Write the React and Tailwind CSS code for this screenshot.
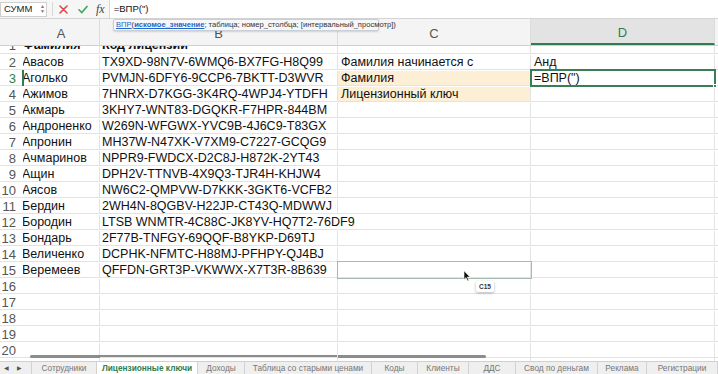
import React from "react";

const rows = [
  ["Авасов", "TX9XD-98N7V-6WMQ6-BX7FG-H8Q99", "Фамилия начинается с", "Анд"],
  ["Аголько", "PVMJN-6DFY6-9CCP6-7BKTT-D3WVR", "Фамилия", "=ВПР(\")"],
  ["Ажимов", "7HNRX-D7KGG-3K4RQ-4WPJ4-YTDFH", "Лицензионный ключ", ""],
  ["Акмарь", "3KHY7-WNT83-DGQKR-F7HPR-844BM", "", ""],
  ["Андроненко", "W269N-WFGWX-YVC9B-4J6C9-T83GX", "", ""],
  ["Апронин", "MH37W-N47XK-V7XM9-C7227-GCQG9", "", ""],
  ["Ачмаринов", "NPPR9-FWDCX-D2C8J-H872K-2YT43", "", ""],
  ["Ащин", "DPH2V-TTNVB-4X9Q3-TJR4H-KHJW4", "", ""],
  ["Аясов", "NW6C2-QMPVW-D7KKK-3GKT6-VCFB2", "", ""],
  ["Бердин", "2WH4N-8QGBV-H22JP-CT43Q-MDWWJ", "", ""],
  ["Бородин", "LTSB WNMTR-4C88C-JK8YV-HQ7T2-76DF9", "", ""],
  ["Бондарь", "2F77B-TNFGY-69QQF-B8YKP-D69TJ", "", ""],
  ["Величенко", "DCPHK-NFMTC-H88MJ-PFHPY-QJ4BJ", "", ""],
  ["Веремеев", "QFFDN-GRT3P-VKWWX-X7T3R-8B639", "", ""],
  ["", "", "", ""],
  ["", "", "", ""],
  ["", "", "", ""],
  ["", "", "", ""],
  ["", "", "", ""],
];

const tabs = [
  { name: "Сотрудники", w: "w-[65px]" },
  { name: "Лицензионные ключи", w: "w-[101px]", active: true },
  { name: "Доходы", w: "w-[47px]" },
  { name: "Таблица со старыми ценами", w: "w-[127px]" },
  { name: "Коды", w: "w-[46px]" },
  { name: "Клиенты", w: "w-[51px]" },
  { name: "ДДС", w: "w-[47px]" },
  { name: "Свод по деньгам", w: "w-[82px]" },
  { name: "Реклама", w: "w-[49px]" },
  { name: "Регистрации", w: "w-[71px]" },
];

function SheetRow({ num, cells }) {
  const [a, b, c, d] = cells;
  const peach = num === 3 || num === 4;
  // row 12's key spills over into column C
  const overflowB = num === 12;
  return (
    <div className="flex h-[16px] pt-[1px] text-[12.5px] leading-[15px] text-[#111]">
      <div
        className={`w-[23px] shrink-0 border-b border-[#e3e3e3] pr-[7px] text-right text-[13px] ${
          num === 3 ? "text-[#2f7d4f]" : "text-[#555]"
        }`}
      >
        {num}
      </div>
      <div className="w-[77px] shrink-0 overflow-hidden whitespace-nowrap border-b border-r border-[#e3e3e3]">
        <span className="-ml-[1px] block">{a}</span>
      </div>
      <div
        className={`relative z-10 w-[238px] shrink-0 whitespace-nowrap border-b border-[#e3e3e3] pl-[2px] ${
          overflowB ? "" : "border-r"
        }`}
      >
        {b}
      </div>
      <div
        className={`w-[193px] shrink-0 whitespace-nowrap border-b border-r border-[#e3e3e3] pl-[3px] ${
          peach ? "bg-[#fcefd6]" : ""
        }`}
      >
        {c}
      </div>
      <div className="w-[184px] shrink-0 whitespace-nowrap border-b border-r border-[#e3e3e3] pl-[3px]">
        {d}
      </div>
      <div className="flex-1 border-b border-[#e3e3e3]" />
    </div>
  );
}

export default function App() {
  return (
    <div
      className="relative h-[374px] w-[718px] overflow-hidden bg-white"
      style={{ fontFamily: '"Liberation Sans", Arial, sans-serif' }}
    >
      {/* formula bar */}
      <div className="flex h-[19px] items-center border-b border-[#d4d4d4] bg-[#f6f6f6]">
        <div className="flex h-[15px] w-[47px] items-center justify-between border border-[#cfcfcf] bg-white pl-[3px] pr-[1px] text-[9.5px] text-[#222]">
          <span>СУММ</span>
          <span className="flex flex-col text-[5px] leading-[5px] text-[#777]">
            <span>▲</span>
            <span>▼</span>
          </span>
        </div>
        <div className="ml-[5px] h-[14px] w-px bg-[#d8d8d8]" />
        <svg width="9" height="9" viewBox="0 0 9 9" className="ml-[6px]">
          <path d="M1 1 L8 8 M8 1 L1 8" stroke="#e0474c" strokeWidth="1.6" strokeLinecap="round" />
        </svg>
        <svg width="10" height="9" viewBox="0 0 10 9" className="ml-[10px]">
          <path d="M1 4.8 L3.8 7.6 L9 1.4" stroke="#3fa45d" strokeWidth="1.6" fill="none" strokeLinecap="round" />
        </svg>
        <span
          className="ml-[8px] text-[12px] italic text-[#444]"
          style={{ fontFamily: '"Liberation Serif", serif' }}
        >
          fx
        </span>
        <div className="ml-[4px] flex h-full flex-1 items-center border-l border-[#d8d8d8] bg-white pl-[4px] text-[9.5px] text-[#111]">
          =ВПР(")
        </div>
      </div>

      {/* function tooltip */}
      <div className="absolute left-[113px] top-[19px] z-30 flex h-[12px] w-[266px] items-center whitespace-nowrap rounded-[2px] border border-[#c9cfd6] bg-[#f5f7fa] pl-[2px] text-[7.6px] text-[#333] shadow-[0_1px_2px_rgba(0,0,0,0.15)]">
        <span className="text-[#2465c8] underline">ВПР</span>
        <span>(</span>
        <span className="font-bold text-[#2465c8] underline">искомое_значение</span>
        <span>; таблица; номер_столбца; [интервальный_просмотр])</span>
      </div>

      {/* column headers */}
      <div className="flex h-[27px] border-b border-[#d0d0d0] bg-[#f4f4f4] text-[13px] text-[#555]">
        <div className="w-[23px] shrink-0" />
        <div className="flex w-[77px] shrink-0 items-center justify-center border-r border-[#dcdcdc] pt-[3px]">A</div>
        <div className="flex w-[238px] shrink-0 items-center justify-center border-r border-[#dcdcdc] pt-[3px]">B</div>
        <div className="flex w-[193px] shrink-0 items-center justify-center border-r border-[#dcdcdc] pt-[3px]">C</div>
        <div className="flex w-[184px] shrink-0 items-center justify-center border-b-2 border-r border-b-[#2f7d4f] border-r-[#dcdcdc] bg-[#e3e3e3] pt-[3px] text-[#2f7d4f]">
          D
        </div>
        <div className="flex-1" />
      </div>

      {/* row 1, mostly hidden under the headers */}
      <div className="h-[8px] overflow-hidden">
        <div className="-mt-[8px] flex h-[16px] text-[12.5px] font-bold leading-[15px] text-[#111]">
          <div className="w-[23px] shrink-0 border-b border-[#e3e3e3] pr-[7px] text-right text-[13px] font-normal text-[#555]">
            1
          </div>
          <div className="w-[77px] shrink-0 overflow-hidden border-b border-r border-[#e3e3e3]">Фамилия</div>
          <div className="w-[238px] shrink-0 border-b border-r border-[#e3e3e3] pl-[2px]">Код лицензии</div>
          <div className="w-[193px] shrink-0 border-b border-r border-[#e3e3e3]" />
          <div className="w-[184px] shrink-0 border-b border-r border-[#e3e3e3]" />
          <div className="flex-1 border-b border-[#e3e3e3]" />
        </div>
      </div>

      {rows.map((cells, i) => (
        <SheetRow key={i} num={i + 2} cells={cells} />
      ))}

      {/* row 21 sliver */}
      <div className="flex h-[3px] overflow-hidden">
        <div className="w-[23px] shrink-0" />
        <div className="w-[77px] shrink-0 border-r border-[#e3e3e3]" />
        <div className="w-[238px] shrink-0 border-r border-[#e3e3e3]" />
        <div className="w-[193px] shrink-0 border-r border-[#e3e3e3]" />
        <div className="w-[184px] shrink-0 border-r border-[#e3e3e3]" />
      </div>

      {/* sheet tabs */}
      <div className="flex h-[13px] items-stretch border-t border-[#d0d0d0] bg-[#efefef] text-[8.3px] text-[#777]">
        <div className="flex w-[32px] shrink-0 items-center gap-[8px] border-r border-[#d2d2d2] pl-[4px] text-[6px] text-[#555]">
          <span>◀</span>
          <span>▶</span>
        </div>
        {tabs.map((t) => (
          <div
            key={t.name}
            className={`flex ${t.w} shrink-0 items-center justify-center whitespace-nowrap border-r border-[#d2d2d2] ${
              t.active ? "bg-white font-bold text-[#2f7d4f]" : ""
            }`}
          >
            {t.name}
          </div>
        ))}
      </div>

      {/* selection overlays */}
      <div className="absolute left-[22px] top-[70px] h-[16px] w-[2px] bg-[#2f7d4f]" />
      <div className="absolute left-[530px] top-[69px] z-20 h-[18px] w-[186px] border-2 border-[#3b7d55]">
        <span className="absolute -bottom-[3px] -right-[3px] h-[4px] w-[4px] border border-white bg-[#3b7d55]" />
      </div>
      <div className="absolute left-[337px] top-[261px] z-20 h-[18px] w-[195px] border-[1.5px] border-[#a3bcad]" />

      {/* horizontal scrollbar */}
      <div className="absolute left-[30px] top-[355px] h-[3px] w-[456px] rounded-full bg-[#8c8c8c]" />

      {/* mouse pointer + cell tooltip */}
      <svg width="8" height="12" viewBox="0 0 8 12" className="absolute left-[463px] top-[270px] z-20">
        <path d="M1 0.8 L1 9.5 L3 7.6 L4.6 11 L5.8 10.4 L4.3 7.1 L7 7.1 Z" fill="#111" stroke="#fff" strokeWidth="0.6" />
      </svg>
      <div className="absolute left-[476px] top-[281px] z-20 flex h-[11px] w-[18px] items-center justify-center rounded-[2px] bg-white text-[6.5px] font-bold text-[#333] shadow-[0_1px_3px_rgba(0,0,0,0.3)]">
        C15
      </div>
    </div>
  );
}
